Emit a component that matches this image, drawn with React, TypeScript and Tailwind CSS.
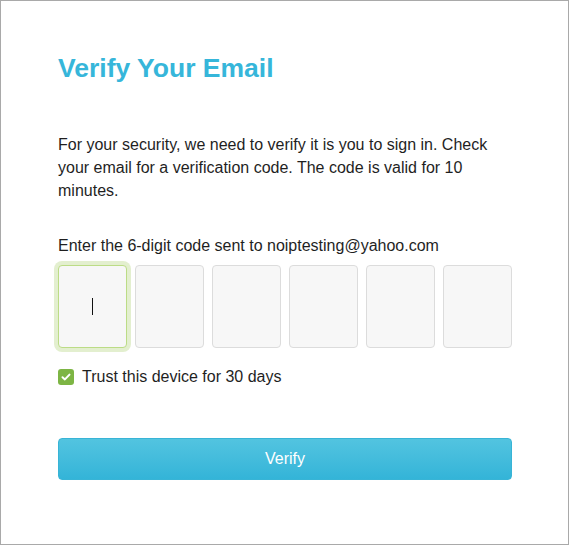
import { useState } from 'react';

export default function App() {
    const [digits, setDigits] = useState<string[]>(['', '', '', '', '', '']);
    const [trust, setTrust] = useState(true);

    return (
        <div className="w-[570px] h-[545px] bg-white" style={{ fontFamily: '"Liberation Sans", Arial, sans-serif' }}>
            <div className="h-full w-[569px] border border-[#a9a9a9] pl-[57px] pr-[56px] pt-[51px]">
                {/* Heading */}
                <h1 className="text-[26.5px] leading-[32px] font-bold text-[#36b6da]">Verify Your Email</h1>

                <p className="mt-[49px] text-[16px] leading-[23px] text-[#1f1f1f]">
                    For your security, we need to verify it is you to sign in. Check your email for a verification code. The code is valid for 10 minutes.
                </p>

                <label className="block mt-[32px] text-[16px] leading-[23px] text-[#1f1f1f]">
                    Enter the 6-digit code sent to noiptesting@yahoo.com
                </label>

                {/* Code inputs */}
                <div className="mt-[8px] flex gap-[8px]">
                    {digits.map((d, i) => (
                        <div key={i} className="relative">
                            <input
                                value={d}
                                maxLength={1}
                                onChange={(e) => {
                                    const next = [...digits];
                                    next[i] = e.target.value;
                                    setDigits(next);
                                }}
                                className={`block w-[69px] h-[83px] rounded-[4px] border bg-[#f7f7f7] text-center text-[22px] text-[#222] outline-none ${i === 0 ? 'border-[#bcdc86] ring-4 ring-[#e3efcf]' : 'border-[#dcdcdc]'}`}
                            />
                            {i === 0 && d === '' && (
                                <span className="pointer-events-none absolute left-[34px] top-[33px] h-[17px] w-px bg-[#111]" />
                            )}
                        </div>
                    ))}
                </div>

                {/* Trust device */}
                <label className="mt-[17px] flex items-center gap-[8px] text-[16px] leading-[23px] text-[#1f1f1f] cursor-pointer">
                    <span
                        onClick={() => setTrust(!trust)}
                        className={`flex size-[16px] items-center justify-center rounded-[3px] ${trust ? 'bg-[#7db544]' : 'border border-[#ccc] bg-white'}`}
                    >
                        {trust && (
                            <svg width="10" height="8" viewBox="0 0 10 8" fill="none">
                                <path d="M1.5 4.2L3.9 6.4L8.5 1.6" stroke="white" strokeWidth="2" strokeLinecap="round" strokeLinejoin="round" />
                            </svg>
                        )}
                    </span>
                    Trust this device for 30 days
                </label>

                <button
                    type="button"
                    className="mt-[50px] block w-[454px] h-[42px] rounded-[4px] bg-gradient-to-b from-[#52c4e0] to-[#33b4d8] border border-[#38b4d6] text-[16px] text-white"
                >
                    Verify
                </button>
            </div>
        </div>
    );
}
